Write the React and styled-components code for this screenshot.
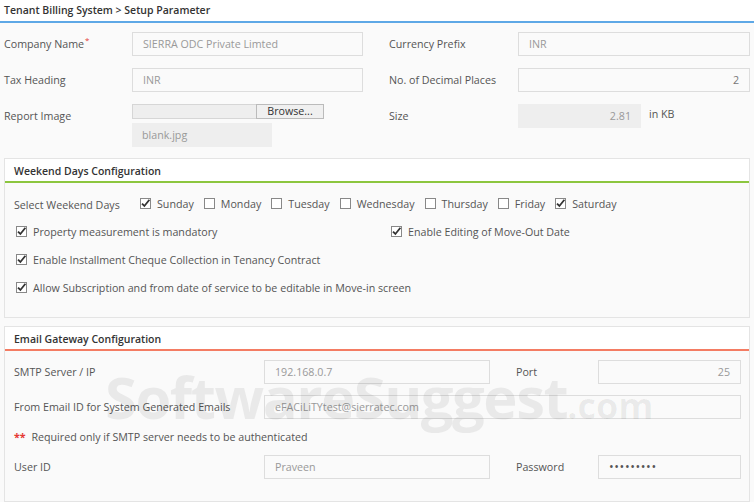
import React from 'react'
import styled, { createGlobalStyle } from 'styled-components'

const GlobalStyle = createGlobalStyle`
  html, body {
    margin: 0;
    padding: 0;
    background: #fafafa;
  }
  body {
    font-family: 'Open Sans', 'DejaVu Sans', sans-serif;
    font-size: 10.7px;
    color: #555;
  }
`

const days = [
  { name: 'Sunday', checked: true },
  { name: 'Monday', checked: false },
  { name: 'Tuesday', checked: false },
  { name: 'Wednesday', checked: false },
  { name: 'Thursday', checked: false },
  { name: 'Friday', checked: false },
  { name: 'Saturday', checked: true }
]

const Check = ({ checked }) => (
  <Box>
    {checked && (
      <svg width='11' height='11' viewBox='0 0 11 11'>
        <path
          d='M2 5.6 L4.4 8 L9.4 1.8'
          fill='none'
          stroke='#333'
          strokeWidth='1.8'
        />
      </svg>
    )}
  </Box>
)

const App = () => {
  return (
    <Page>
      <GlobalStyle />
      <Title>Tenant Billing System &gt; Setup Parameter</Title>
      <TopForm>
        <Label>
          Company Name<Req>*</Req>
        </Label>
        <Input>SIERRA ODC Private Limted</Input>
        <Label indent>Currency Prefix</Label>
        <Input>INR</Input>

        <Label>Tax Heading</Label>
        <Input>INR</Input>
        <Label indent>No. of Decimal Places</Label>
        <Input right dark>2</Input>

        <Label>Report Image</Label>
        <FileCol>
          <FileRow>
            <FileField />
            <Browse>Browse...</Browse>
          </FileRow>
          <Readonly>blank.jpg</Readonly>
        </FileCol>
        <Label indent>Size</Label>
        <SizeRow>
          <Readonly right width='123px'>
            2.81
          </Readonly>
          <Unit>in KB</Unit>
        </SizeRow>
      </TopForm>

      <Section>
        <SectionHead color='#8cc63f'>Weekend Days Configuration</SectionHead>
        <WeekBody>
          <DaysRow>
            <DaysLabel>Select Weekend Days</DaysLabel>
            {days.map(d => (
              <Option key={d.name}>
                <Check checked={d.checked} />
                {d.name}
              </Option>
            ))}
          </DaysRow>
          <TwoCol>
            <Option>
              <Check checked />
              Property measurement is mandatory
            </Option>
            <Option>
              <Check checked />
              Enable Editing of Move-Out Date
            </Option>
          </TwoCol>
          <Option>
            <Check checked />
            Enable Installment Cheque Collection in Tenancy Contract
          </Option>
          <Option>
            <Check checked />
            Allow Subscription and from date of service to be editable in
            Move-in screen
          </Option>
        </WeekBody>
      </Section>

      <Section>
        <SectionHead color='#f47c63'>Email Gateway Configuration</SectionHead>
        <MailGrid>
          <Label>SMTP Server / IP</Label>
          <Input>192.168.0.7</Input>
          <Label indent>Port</Label>
          <Input right>25</Input>

          <Label>From Email ID for System Generated Emails</Label>
          <Input span>eFACiLiTYtest@sierratec.com</Input>

          <Note>
            <Stars>**</Stars> Required only if SMTP server needs to be
            authenticated
          </Note>

          <Label>User ID</Label>
          <Input>Praveen</Input>
          <Label indent>Password</Label>
          <Dots>•••••••••</Dots>
        </MailGrid>
        <Watermark>
          SoftwareSuggest<small>.com</small>
        </Watermark>
      </Section>
    </Page>
  )
}

export default App

const Page = styled.div`
  width: 754px;
  height: 502px;
  overflow: hidden;
  background: #fafafa;
`
const Title = styled.div`
  height: 21px;
  line-height: 21px;
  padding-left: 4px;
  background: #fff;
  border-bottom: 2px solid #5ea8e6;
  font-weight: 600;
  color: #333;
  font-size: 10.5px;
`
const TopForm = styled.div`
  display: grid;
  grid-template-columns: 128px 231px 155px 232px;
  row-gap: 12px;
  padding: 9px 4px 0 4px;
  height: 126px;
  align-content: start;
`
const Label = styled.div`
  display: flex;
  align-items: center;
  height: 24px;
  align-self: start;
  padding-left: ${p => (p.indent ? '26px' : '0')};
  color: #555;
  white-space: nowrap;
`
const Req = styled.span`
  color: #e53935;
  font-size: 8px;
  line-height: 0;
  margin-left: 1px;
  position: relative;
  top: -4px;
`
const Input = styled.div`
  box-sizing: border-box;
  height: 24px;
  line-height: 22px;
  border: 1px solid #ddd;
  background: #fafafa;
  padding: 0 10px;
  color: ${p => (p.dark ? '#777' : '#999')};
  text-align: ${p => (p.right ? 'right' : 'left')};
  grid-column: ${p => (p.span ? 'span 3' : 'auto')};
  white-space: nowrap;
  overflow: hidden;
`
const Dots = styled(Input)`
  color: #555;
  font-size: 12.5px;
  letter-spacing: 0.6px;
  line-height: 22px;
`
const FileCol = styled.div`
  display: flex;
  flex-direction: column;
  gap: 4px;
`
const FileRow = styled.div`
  display: flex;
  height: 15px;
`
const FileField = styled.div`
  width: 124px;
  box-sizing: border-box;
  background: #eee;
  border: 1px solid #d6d6d6;
  border-right: none;
`
const Browse = styled.div`
  width: 68px;
  box-sizing: border-box;
  background: #f0f0f0;
  border: 1px solid #bbb;
  color: #333;
  text-align: center;
  line-height: 13px;
`
const Readonly = styled.div`
  box-sizing: border-box;
  width: ${p => p.width || '140px'};
  height: 24px;
  line-height: 24px;
  background: #eee;
  padding: 0 10px;
  color: #999;
  text-align: ${p => (p.right ? 'right' : 'left')};
`
const SizeRow = styled.div`
  display: flex;
  align-items: flex-start;
  gap: 8px;
`
const Unit = styled.span`
  line-height: 20px;
  color: #555;
`
const Section = styled.div`
  position: relative;
  margin: 0 4px 8px 4px;
  border: 1px solid #e4e4e4;
  background: #fafafa;
`
const SectionHead = styled.div`
  height: 22px;
  line-height: 24px;
  padding-left: 9px;
  background: #fff;
  border-bottom: 2px solid ${p => p.color};
  font-weight: 600;
  color: #333;
  font-size: 10.5px;
`
const WeekBody = styled.div`
  display: flex;
  flex-direction: column;
  gap: 13px;
  padding: 13px 0 22px 11px;
`
const DaysRow = styled.div`
  display: flex;
  align-items: center;
`
const DaysLabel = styled.span`
  width: 126px;
  margin-left: -2px;
  position: relative;
  top: 1px;
`
const Option = styled.label`
  display: flex;
  align-items: center;
  gap: 6px;
  margin-right: 10px;
  height: 15px;
  color: #555;
  white-space: nowrap;
`
const Box = styled.span`
  box-sizing: border-box;
  width: 11px;
  height: 11px;
  border: 1px solid #888;
  background: #fff;
  display: inline-flex;
  align-items: center;
  justify-content: center;
  & svg {
    margin: -1px;
  }
`
const TwoCol = styled.div`
  display: grid;
  grid-template-columns: 375px auto;
`
const MailGrid = styled.div`
  display: grid;
  grid-template-columns: 250px 226px 108px 143px;
  row-gap: 11px;
  padding: 9px 0 22px 9px;
`
const Note = styled.div`
  grid-column: span 4;
  color: #555;
`
const Stars = styled.span`
  color: #e53935;
  font-weight: 700;
  margin-right: 3px;
`
const Watermark = styled.div`
  position: absolute;
  left: 100px;
  top: 30px;
  font-family: 'Open Sans', sans-serif;
  font-weight: 700;
  font-size: 58px;
  letter-spacing: -1.5px;
  color: rgba(0, 0, 0, 0.065);
  pointer-events: none;
  white-space: nowrap;
  & small {
    font-size: 36px;
    letter-spacing: 0;
  }
`
